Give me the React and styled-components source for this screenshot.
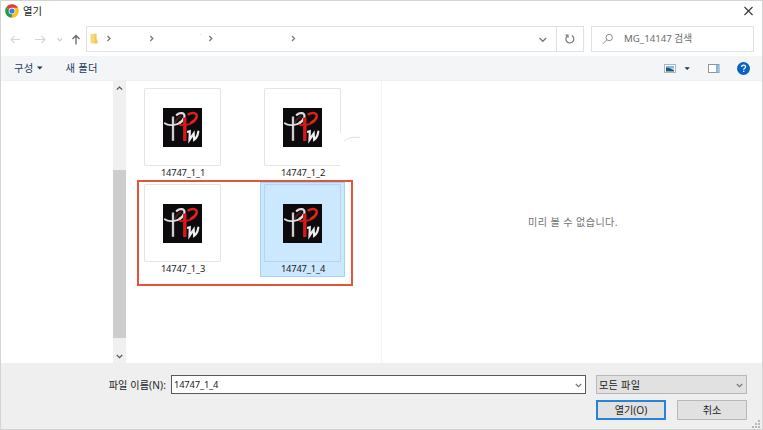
import React from "react";
import styled, { createGlobalStyle, css } from "styled-components";

const GlobalStyle = createGlobalStyle`
  * { box-sizing: border-box; }
  body { margin: 0; background: #fff; }
`;

const Dialog = styled.main`
  width: 763px;
  height: 430px;
  display: flex;
  flex-direction: column;
  border: 1px solid #d4d4d4;
  background: #fff;
  color: #222;
  font-family: "Noto Sans", "Noto Sans CJK KR", sans-serif;
  font-size: 9.5px;
  line-height: 14px;
  white-space: nowrap;
  overflow: hidden;
`;

const TitleBar = styled.header`
  height: 25px;
  flex: none;
  display: flex;
  align-items: center;
  padding: 0 8px 5px 4px;
`;

const Title = styled.h1`
  margin: 0 auto 0 4px;
  font-size: 10.3px;
  font-weight: 400;
`;

const NavRow = styled.nav`
  height: 30px;
  flex: none;
  display: flex;
  align-items: flex-start;
  padding-right: 7px;
`;

const NavArrows = styled.div`
  width: 85px;
  height: 26px;
  flex: none;
`;

const Field = styled.div`
  height: 26px;
  display: flex;
  align-items: center;
  border: 1px solid #e1e1e1;
  background: #fff;
`;

const Address = styled(Field)`
  width: 498px;
  margin-right: 7px;
`;

const Crumbs = styled.div`
  width: 470px;
  height: 24px;
  border-right: 1px solid #e1e1e1;
`;

const Search = styled(Field)`
  width: 163px;
  color: #6c6c6c;
  font-size: 9.7px;
  padding-left: 9px;
`;

const CommandBar = styled.div`
  height: 25px;
  flex: none;
  display: flex;
  align-items: center;
  padding: 0 11px 0 13px;
  background: #f4f5f7;
  border-bottom: 1px solid #eff0f2;
  color: #243a5c;
`;

const Command = styled.div`
  display: flex;
  align-items: center;
  gap: 3px;
  margin-right: 23px;
  font-size: 10.3px;
  letter-spacing: 0.3px;
`;

const CommandIcons = styled.div`
  margin-left: auto;
  height: 24px;
`;

const Body = styled.section`
  height: 282px;
  flex: none;
  display: flex;
`;

const Tree = styled.aside`
  width: 125px;
  flex: none;
  display: flex;
  justify-content: flex-end;
`;

const Scrollbar = styled.div`
  width: 13px;
  display: flex;
  flex-direction: column;
  justify-content: space-between;
  background: #f0f0f0;
`;

const ScrollThumb = styled.div`
  height: 168px;
  margin-top: 64px;
  background: #cdcdcd;
`;

const Files = styled.div`
  width: 255px;
  flex: none;
  position: relative;
  display: grid;
  grid-template-columns: 85px 85px;
  grid-template-rows: 96px 95px;
  column-gap: 35px;
  align-content: start;
  padding: 5px 0 0 14px;
`;

const File = styled.figure`
  margin: 0;
  display: flex;
  flex-direction: column;
  align-items: center;
  border: 1px solid transparent;
  padding-top: 1px;
  ${(p) =>
    p.$selected &&
    css`
      background: #cce8ff;
      border-color: #9fd3f8;
    `}
`;

const Thumb = styled.div`
  width: 77px;
  height: 78px;
  margin-right: 1px;
  flex: none;
  display: flex;
  align-items: center;
  justify-content: center;
  background: ${(p) => (p.$selected ? "transparent" : "#fff")};
  border: 1px solid ${(p) => (p.$selected ? "#bbd3e6" : "#e4e4e4")};
  border-radius: 1px;
`;

const FileName = styled.figcaption`
  font-size: 9.4px;
  line-height: 13px;
  letter-spacing: -0.18px;
  padding-left: 1px;
`;

const Highlight = styled.div`
  position: absolute;
  left: 11px;
  top: 99px;
  width: 216px;
  height: 106px;
  border: 2px solid #e2553a;
`;

const Stroke = styled.svg`
  position: absolute;
  left: 214px;
  top: 52px;
  background: #fff;
`;

const Preview = styled.div`
  flex: 1;
  display: flex;
  align-items: center;
  justify-content: center;
  border-left: 1px solid #f4f4f4;
  padding-left: 2px;
  color: #737373;
  font-size: 10.1px;
  letter-spacing: 0.42px;
`;

const Footer = styled.footer`
  flex: 1;
  display: grid;
  grid-template-columns: 165px 415px 152px;
  grid-template-rows: 19px 20px;
  column-gap: 5px;
  row-gap: 6px;
  padding-top: 12px;
  background: #efefef;
  position: relative;
`;

const Label = styled.label`
  text-align: right;
  line-height: 20px;
  font-size: 10.1px;
  letter-spacing: 0.12px;
`;

const Combo = styled.div`
  display: flex;
  align-items: center;
  justify-content: space-between;
  margin-left: ${(p) => (p.$filled ? "5px" : "0")};
  padding: 1px 3px 0 2px;
  border: 1px solid ${(p) => (p.$filled ? "#b8b8b8" : "#5a5a5a")};
  background: ${(p) => (p.$filled ? "#e1e1e1" : "#fff")};
  width: ${(p) => (p.$filled ? "151px" : "auto")};
  font-size: ${(p) => (p.$filled ? "10.1px" : "9.4px")};
  letter-spacing: ${(p) => (p.$filled ? "0.3px" : "-0.18px")};
`;

const Actions = styled.div`
  grid-column: 3;
  display: flex;
  gap: 11px;
  padding-left: 5px;
`;

const Button = styled.button`
  width: 70px;
  height: 20px;
  flex: none;
  padding: 0 0 1px;
  border: ${(p) => (p.$primary ? "2px solid #2683d8" : "1px solid #b8b8b8")};
  background: #e1e1e1;
  color: #222;
  font: inherit;
  font-size: 10.1px;
  line-height: 14px;
`;

const Grip = styled.svg`
  position: absolute;
  right: 1px;
  bottom: 1px;
`;

const ChromeIcon = () => (
  <svg width="14" height="14" viewBox="0 0 14 14">
    <path d="M7 7 1.1 3.6A6.7 6.7 0 0 1 12.9 3.8Z" fill="#e33b2e" />
    <path d="M7 7 12.9 3.8A6.7 6.7 0 0 1 6.8 13.7Z" fill="#fbc116" />
    <path d="M7 7 6.8 13.7A6.7 6.7 0 0 1 1.1 3.6Z" fill="#279847" />
    <path d="M7 3.8h5.9L10 7Z" fill="#fbc116" />
    <circle cx="7" cy="7" r="3.3" fill="#fff" />
    <circle cx="7" cy="7" r="2.6" fill="#337de8" />
  </svg>
);

const ArrowIcons = () => (
  <svg width="85" height="26" fill="none" strokeWidth="1.1">
    <path d="M19 13.5H10M13.5 10 10 13.5 13.5 17M34 13.5h10M40.500 10 44 13.500 40.500 17" stroke="#d6d6d6" />
    <path d="m56.500 12.500 2.300 2.300 2.300-2.300" stroke="#c9c9c9" />
    <path d="M75 18.500V9.500M71.500 13 75 9.500 78.500 13" stroke="#666" strokeWidth="1.3" />
  </svg>
);

const CrumbIcons = () => (
  <svg width="468" height="24" fill="none" stroke="#777" strokeWidth="1.3">
    <path d="M3.500 7h5.800v9.500H3.500Z" fill="#f9d879" stroke="none" />
    <path d="M7.500 6.500h2v6h1v4h-3Z" fill="#efc864" stroke="none" />
    <path d="m20.500 9 2.500 2.500L20.500 14M63.300 9l2.500 2.500-2.500 2.500M122.300 9l2.500 2.500-2.500 2.500M205 9l2.500 2.500-2.500 2.500" />
    <path d="m452.500 11 3.300 3.300L459.100 11" />
    <path d="M113 7.500h1" stroke="#ddd" strokeWidth="1" />
  </svg>
);

const RefreshIcon = () => (
  <svg width="26" height="24" fill="none" stroke="#777" strokeWidth="1.200">
    <path d="M14.800 8.500A4 4 0 1 1 10.600 8.700" />
    <path d="M8.500 8.200H11v2.500" />
  </svg>
);

const SearchIcon = () => (
  <svg width="23" height="16" fill="none" stroke="#8a8a8a" strokeWidth="1">
    <circle cx="8.200" cy="6.500" r="3.200" />
    <path d="m5.800 8.900-4 4" />
  </svg>
);

const ViewIcons = () => (
  <svg width="87" height="24">
    <rect x=".5" y="8.500" width="11" height="8" fill="#fff" stroke="#a9b4bf" />
    <path d="M2 10h8v2.500H2Z" fill="#7fb6e8" />
    <path d="M2 11.500q4 .2 8 2.500v1.500H2Z" fill="#24586f" />
    <path d="M20.500 11.300h5.400L23.200 14.100Z" fill="#1d3557" />
    <rect x="44.500" y="8.500" width="10.500" height="8" fill="#fff" stroke="#8d959e" />
    <path d="M52 9h2.500v7.500H52Z" fill="#78bdec" />
    <circle cx="79.500" cy="12.500" r="6.500" fill="#0a62c3" />
    <path d="M77.600 11c0-2.600 4-2.500 4-.3 0 1.500-1.900 1.500-1.900 3M79.700 14.700v1.300" fill="none" stroke="#fff" strokeWidth="1.300" />
  </svg>
);

const Chevron = ({ up, color = "#555", width = 13 }) => (
  <svg width={width} height="14" fill="none" stroke={color} strokeWidth="1.200">
    <path
      d={
        up
          ? `M${width / 2 - 2.7} 8.700 ${width / 2} 6l2.700 2.700`
          : `M${width / 2 - 2.7} 6 ${width / 2} 8.700l2.700-2.700`
      }
    />
  </svg>
);

const Emblem = () => (
  <svg width="39" height="39" viewBox="0 0 39 39" fill="none" strokeLinecap="round">
    <rect width="39" height="39" fill="#0c0a0c" />
    <path d="M12.500 14q1.500-4 5-5.500" stroke="#4a1c1c" strokeWidth="2" />
    <path d="M10 8.500v24.300" stroke="#cfcfcf" strokeWidth="2.300" strokeLinecap="butt" />
    <path d="M1.800 15.300C5 18 17 18.500 20.800 10.500" stroke="#dedede" strokeWidth="1.800" />
    <path d="M13.800 6.800C17 4 22.500 4.500 21.300 9.300Q20.300 12.300 16.500 14.800" stroke="#dedede" strokeWidth="2.300" />
    <path d="M21.800 9.500v23.500" stroke="#d61912" strokeWidth="3.400" strokeLinecap="butt" />
    <path d="M17 17C24 17.500 31.500 15.500 33.300 10.500" stroke="#d61912" strokeWidth="1.800" />
    <path d="M25.500 6.300C29 4 34.800 4.700 33.700 9Q32.500 12.600 28 14.500" stroke="#e32219" strokeWidth="2.400" />
    <path d="m25 23.800 1.800-.6-.3 8.600 4.200-6.300.4 6.300c2.300-1.500 3.700-4.700 4.200-8.300" stroke="#ededed" strokeWidth="2.200" />
  </svg>
);

const FileTile = ({ name, selected }) => (
  <File $selected={selected}>
    <Thumb $selected={selected}>
      <Emblem />
    </Thumb>
    <FileName>{name}</FileName>
  </File>
);

export default function App() {
  return (
    <>
      <GlobalStyle />
      <Dialog>
        <TitleBar>
          <ChromeIcon />
          <Title>열기</Title>
          <svg width="12" height="12" stroke="#333" strokeWidth="1.100">
            <path d="m2.500 2 8 8m0-8-8 8" />
          </svg>
        </TitleBar>
        <NavRow>
          <NavArrows>
            <ArrowIcons />
          </NavArrows>
          <Address>
            <Crumbs>
              <CrumbIcons />
            </Crumbs>
            <RefreshIcon />
          </Address>
          <Search>
            <SearchIcon />
            <span>MG_14147 검색</span>
          </Search>
        </NavRow>
        <CommandBar>
          <Command>
            구성
            <svg width="6" height="4">
              <path d="M0 .5h5.600L2.800 3.500Z" fill="#1d3557" />
            </svg>
          </Command>
          <Command>새 폴더</Command>
          <CommandIcons>
            <ViewIcons />
          </CommandIcons>
        </CommandBar>
        <Body>
          <Tree>
            <Scrollbar>
              <Chevron up />
              <ScrollThumb />
              <Chevron />
            </Scrollbar>
          </Tree>
          <Files>
            <FileTile name="14747_1_1" />
            <FileTile name="14747_1_2" />
            <FileTile name="14747_1_3" />
            <FileTile name="14747_1_4" selected />
            <Stroke width="22" height="34" fill="none">
              <path d="M4 8q6-5 16-3.500" stroke="#e3d5d5" strokeWidth=".8" />
            </Stroke>
            <Highlight />
          </Files>
          <Preview>미리 볼 수 없습니다.</Preview>
        </Body>
        <Footer>
          <Label>파일 이름(N):</Label>
          <Combo>
            14747_1_4
            <Chevron width={7} color="#777" />
          </Combo>
          <Combo $filled>
            모든 파일
            <Chevron width={7} color="#777" />
          </Combo>
          <Actions>
            <Button $primary>열기(O)</Button>
            <Button>취소</Button>
          </Actions>
          <Grip width="9" height="9" fill="#b9b9b9">
            <path d="M6 1h2v2H6zM3 4h2v2H3zM6 4h2v2H6zM0 7h2v2H0zM3 7h2v2H3zM6 7h2v2H6z" />
          </Grip>
        </Footer>
      </Dialog>
    </>
  );
}
